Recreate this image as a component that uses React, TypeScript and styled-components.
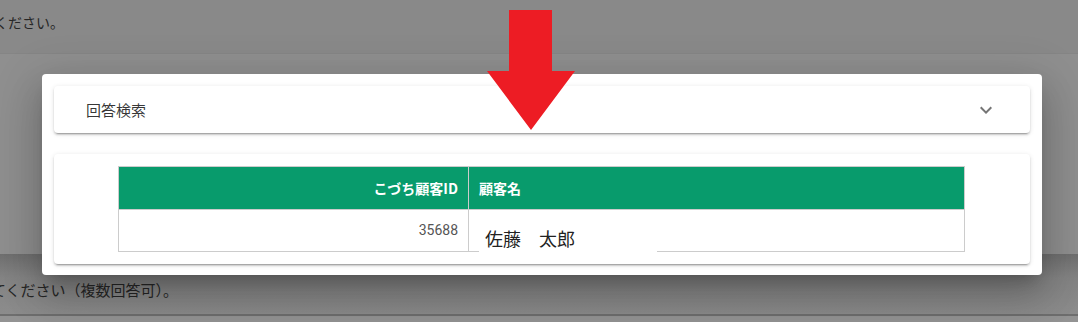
import React from "react";
import styled, { createGlobalStyle } from "styled-components";

const Global = createGlobalStyle`
  html, body { margin: 0; padding: 0; }
  body {
    width: 1078px;
    height: 322px;
    overflow: hidden;
    font-family: Roboto, "Noto Sans CJK JP", sans-serif;
  }
`;

const Page = styled.div`
  position: relative;
  width: 1078px;
  height: 322px;
  overflow: hidden;
  background: #8f8f8f;
  display: flex;
  flex-direction: column;
`;

const TopBand = styled.div`
  height: 54px;
  background: #898989;
  border-bottom: 1px solid #858585;
  display: flex;
  align-items: center;
  padding-bottom: 9px;
  box-sizing: border-box;
`;

const PageText = styled.div<{ $shift: number; $size: number }>`
  font-family: "Noto Sans CJK JP", sans-serif;
  font-size: ${(p) => p.$size}px;
  color: #262626;
  margin-left: ${(p) => p.$shift}px;
  white-space: nowrap;
`;

const Middle = styled.div`
  flex: 1;
`;

const BottomRow = styled.div`
  height: 62px;
  display: flex;
  align-items: center;
  padding-top: 10px;
  box-sizing: border-box;
  border-bottom: 2px solid #6e6e6e;
  background: linear-gradient(#6f6f6f, #848484 40%, #8c8c8c);
`;

const BottomStrip = styled.div`
  height: 6px;
  background: #939393;
`;

const Dialog = styled.div`
  position: absolute;
  left: 42px;
  top: 74px;
  width: 1000px;
  height: 201px;
  box-sizing: border-box;
  background: #fff;
  border-radius: 4px;
  padding: 12px;
  display: flex;
  flex-direction: column;
  gap: 21px;
  box-shadow: 0 11px 15px -7px rgba(0, 0, 0, 0.2),
    0 24px 38px 3px rgba(0, 0, 0, 0.14), 0 9px 46px 8px rgba(0, 0, 0, 0.12);
`;

const Card = styled.div`
  background: #fff;
  border-radius: 4px;
  box-shadow: 0 3px 1px -2px rgba(0, 0, 0, 0.2), 0 2px 2px 0 rgba(0, 0, 0, 0.14),
    0 1px 5px 0 rgba(0, 0, 0, 0.12);
`;

const PanelHeader = styled.div`
  height: 47px;
  display: flex;
  align-items: center;
  justify-content: space-between;
  padding: 0 32px;
  font-family: "Noto Sans CJK JP", sans-serif;
  font-size: 15px;
  color: rgba(0, 0, 0, 0.8);
`;

const Chevron = styled.svg`
  width: 24px;
  height: 24px;
  fill: #757575;
`;

const TableCard = styled(Card)`
  padding: 12px 65px 12px 64px;
`;

const Table = styled.div`
  display: grid;
  grid-template-columns: 350px 1fr;
  grid-template-rows: 42px 42px;
  border: 1px solid #cccccc;
  box-sizing: border-box;
`;

const HeadCell = styled.div<{ $right?: boolean }>`
  background: #089b6c;
  color: #fff;
  font-family: "Noto Sans CJK JP", sans-serif;
  font-weight: 700;
  font-size: 14px;
  display: flex;
  align-items: center;
  justify-content: ${(p) => (p.$right ? "flex-end" : "flex-start")};
  padding: 0 10px;
  border-right: ${(p) => (p.$right ? "1px solid #cccccc" : "none")};
`;

const BodyCell = styled.div<{ $right?: boolean }>`
  font-family: Roboto, "Noto Sans CJK JP", sans-serif;
  font-size: 14px;
  color: #555;
  display: flex;
  align-items: center;
  justify-content: ${(p) => (p.$right ? "flex-end" : "flex-start")};
  padding: 0 10px;
  border-right: ${(p) => (p.$right ? "1px solid #cccccc" : "none")};
  border-top: 1px solid #cccccc;
  position: relative;
  padding-bottom: ${(p) => (p.$right ? "2px" : "0")};
`;

const NameBox = styled.div`
  position: absolute;
  left: 10px;
  top: 11px;
  width: 178px;
  height: 33px;
  background: #fff;
  font-family: "Noto Sans CJK JP", sans-serif;
  font-size: 18px;
  color: #222;
  display: flex;
  align-items: center;
  padding-left: 6px;
  box-sizing: border-box;
  white-space: pre;
`;

const Arrow = styled.svg`
  position: absolute;
  left: 486px;
  top: 10px;
  width: 90px;
  height: 121px;
`;

export default function App() {
  return (
    <>
      <Global />
      <Page>
        <TopBand>
          <PageText $shift={-6} $size={14}>ください。</PageText>
        </TopBand>
        <Middle />
        <BottomRow>
          <PageText $shift={-9} $size={15}>てください（複数回答可）。</PageText>
        </BottomRow>
        <BottomStrip />

        <Dialog>
          <Card>
            <PanelHeader>
              <span>回答検索</span>
              <Chevron viewBox="0 0 24 24">
                <path d="M7.41,8.58L12,13.17L16.59,8.58L18,10L12,16L6,10L7.41,8.58Z" />
              </Chevron>
            </PanelHeader>
          </Card>
          <TableCard>
            <Table>
              <HeadCell $right>こづち顧客ID</HeadCell>
              <HeadCell>顧客名</HeadCell>
              <BodyCell $right>35688</BodyCell>
              <BodyCell>
                <NameBox>佐藤　太郎</NameBox>
              </BodyCell>
            </Table>
          </TableCard>
        </Dialog>

        <Arrow viewBox="0 0 90 121">
          <polygon
            points="23,0 66,0 66,61 89,61 45,120 1,61 23,61"
            fill="#ed1c24"
          />
        </Arrow>
      </Page>
    </>
  );
}
